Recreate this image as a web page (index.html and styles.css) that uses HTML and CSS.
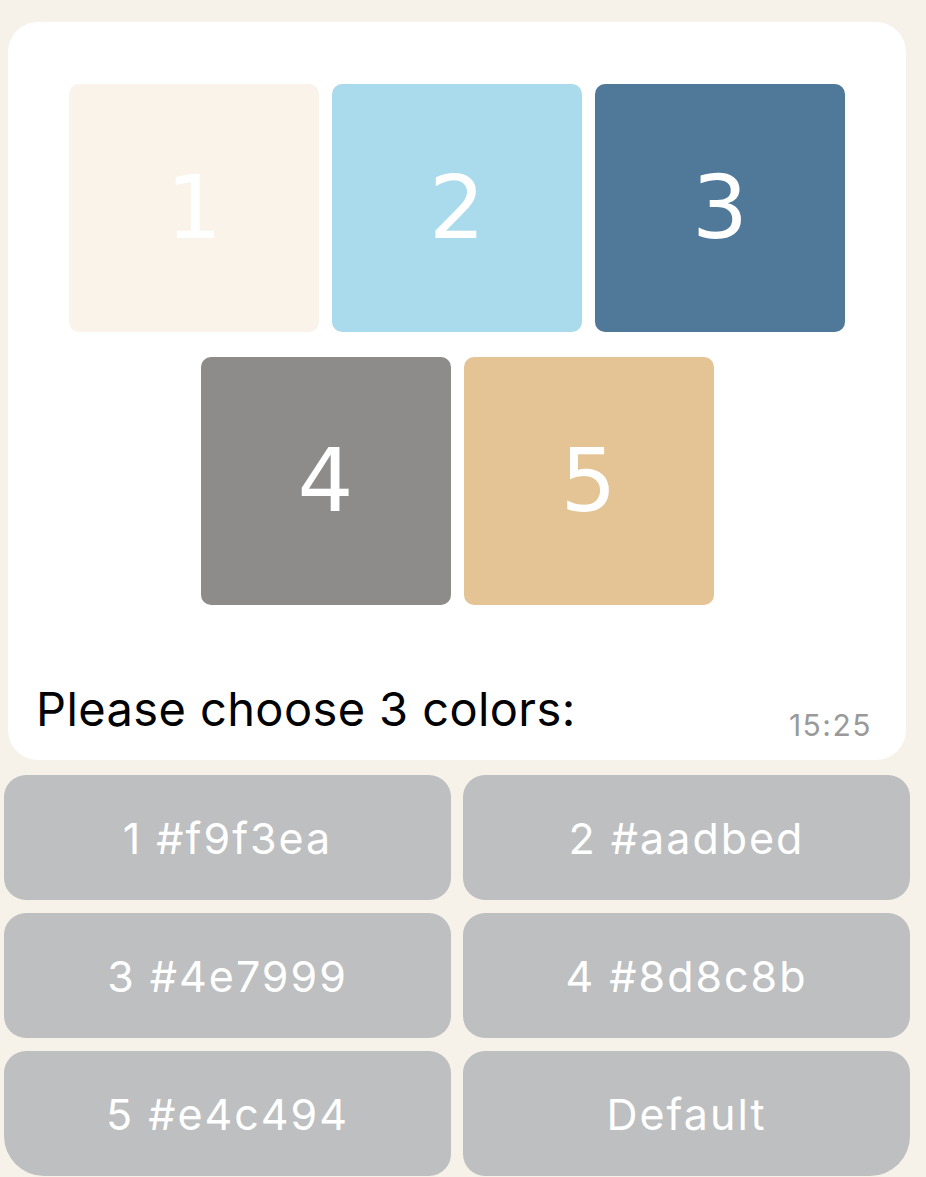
FILE: index.html
```html
<!DOCTYPE html>
<html>
<head>
<meta charset="utf-8">
<link rel="stylesheet" href="styles.css">
</head>
<body>
<div class="chat">
  <div class="bubble">
    <div class="palette">
      <div class="swatch-row">
        <div class="swatch c1">1</div>
        <div class="swatch c2">2</div>
        <div class="swatch c3">3</div>
      </div>
      <div class="swatch-row">
        <div class="swatch c4">4</div>
        <div class="swatch c5">5</div>
      </div>
    </div>
    <div class="message">
      <span class="text">Please choose 3 colors:</span>
      <span class="time">15:25</span>
    </div>
  </div>
  <div class="keyboard">
    <div class="key">1 #f9f3ea</div>
    <div class="key">2 #aadbed</div>
    <div class="key">3 #4e7999</div>
    <div class="key">4 #8d8c8b</div>
    <div class="key key-bl">5 #e4c494</div>
    <div class="key key-br">Default</div>
  </div>
</div>
</body>
</html>
```

FILE: styles.css
```css
html, body {
  margin: 0;
  padding: 0;
  background: #f7f2e9;
  overflow: hidden;
}
.chat {
  width: 926px;
  height: 1177px;
  padding-top: 22px;
  box-sizing: border-box;
}
.bubble {
  margin-left: 8px;
  width: 898px;
  height: 738px;
  background: #ffffff;
  border-radius: 30px;
  box-sizing: border-box;
  padding-top: 62px;
  display: flex;
  flex-direction: column;
}
.palette {
  display: flex;
  flex-direction: column;
  gap: 25px;
}
.swatch-row {
  display: flex;
  justify-content: center;
  gap: 13px;
}
.swatch {
  width: 250px;
  height: 248px;
  border-radius: 10px;
  display: flex;
  align-items: center;
  justify-content: center;
  color: #ffffff;
  font-family: "DejaVu Sans", sans-serif;
  font-size: 88px;
  line-height: 1;
}
.c1 { background: #f9f3ea; }
.c2 { background: #aadbed; }
.c3 { background: #4f7899; }
.c4 { background: #8d8c8b; }
.c5 { background: #e4c494; }
.message {
  display: flex;
  justify-content: space-between;
  align-items: baseline;
  padding: 0 34px 0 28px;
  margin-top: 76px;
}
.text {
  font-family: Inter, "Liberation Sans", Arial, sans-serif;
  font-size: 47px;
  letter-spacing: 0.4px;
  color: #000000;
  line-height: 56px;
}
.time {
  font-family: Inter, "Liberation Sans", Arial, sans-serif;
  font-size: 30px;
  letter-spacing: 1.5px;
  color: #9a9a9a;
  position: relative;
  top: 10px;
}
.keyboard {
  margin-top: 15px;
  margin-left: 4px;
  width: 906px;
  display: grid;
  grid-template-columns: 447px 447px;
  grid-auto-rows: 125px;
  column-gap: 12px;
  row-gap: 13px;
}
.key {
  background: #bebfc1;
  border-radius: 22px;
  display: flex;
  align-items: center;
  justify-content: center;
  color: #ffffff;
  font-family: Inter, "Liberation Sans", Arial, sans-serif;
  font-size: 43px;
  letter-spacing: 2px;
}
.key-bl { border-bottom-left-radius: 40px; }
.key-br { border-bottom-right-radius: 40px; }
```
